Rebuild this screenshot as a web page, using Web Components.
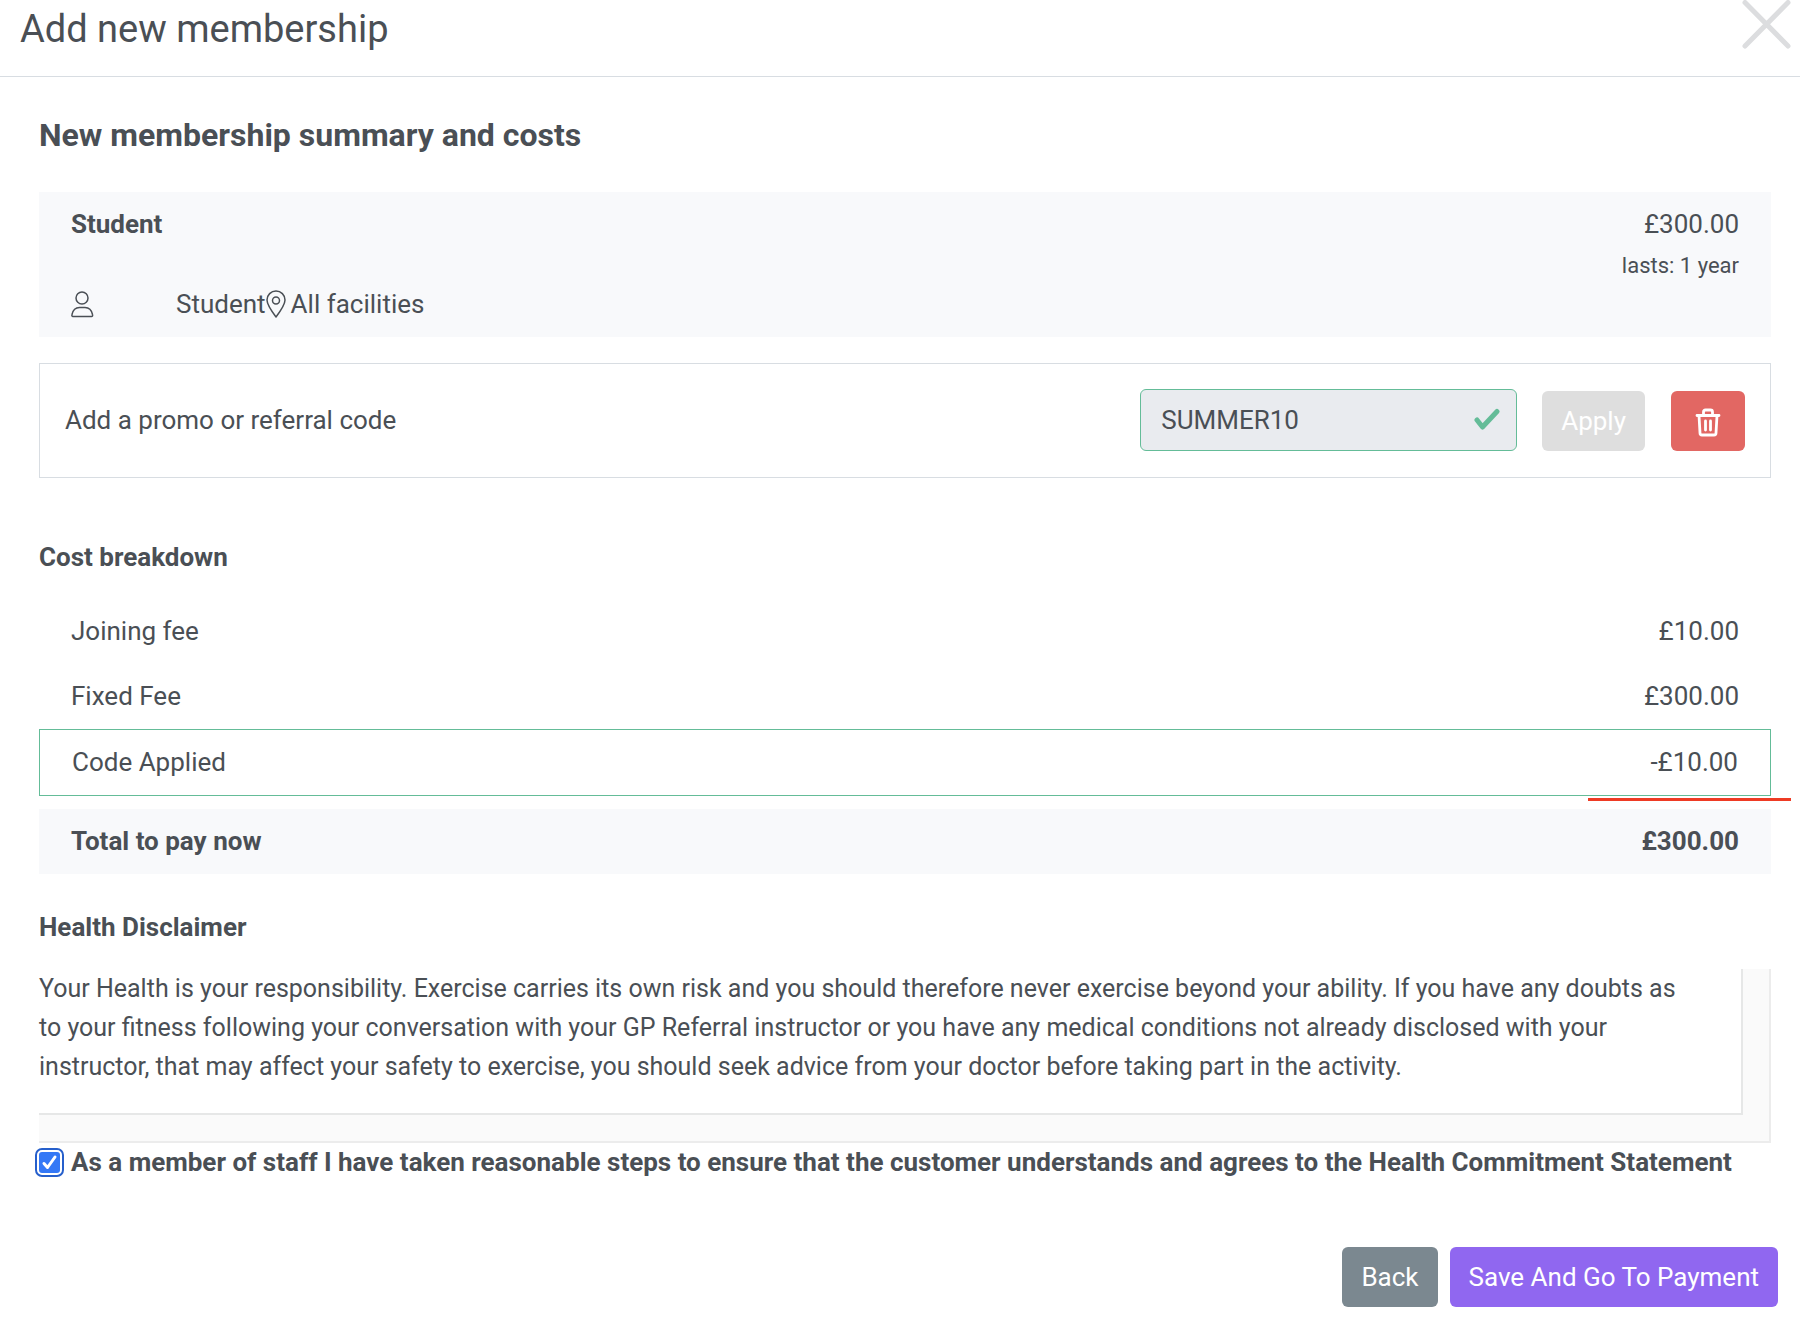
<!DOCTYPE html>
<html lang="en">
<head>
<meta charset="utf-8">
<title>Add new membership</title>
<style>
  body {
    margin: 0;
    background: #FFF;
    color: #4A4F55;
    font: 26px/39px Roboto, "Liberation Sans", sans-serif;
  }
</style>
</head>
<body>
<membership-dialog>
  <span slot="title">Add new membership</span>
  <section-title size="large">New membership summary and costs</section-title>
  <membership-summary>
    <b slot="name">Student</b>
    <span slot="price">£300.00</span>
    <span slot="duration">lasts: 1 year</span>
    <span slot="person">Student</span>
    <span slot="place">All facilities</span>
  </membership-summary>
  <promo-code value="SUMMER10"></promo-code>
  <cost-breakdown></cost-breakdown>
  <health-disclaimer>Your Health is your responsibility. Exercise carries its own risk and you should therefore never exercise beyond your ability. If you have any doubts as to your fitness following your conversation with your GP Referral instructor or you have any medical conditions not already disclosed with your instructor, that may affect your safety to exercise, you should seek advice from your doctor before taking part in the activity.</health-disclaimer>
  <staff-consent>As a member of staff I have taken reasonable steps to ensure that the customer understands and agrees to the Health Commitment Statement</staff-consent>
  <action-button slot="actions" color="#7B8890">Back</action-button>
  <action-button slot="actions" color="#9067F0">Save And Go To Payment</action-button>
</membership-dialog>

<script>
customElements.define('membership-dialog', class MembershipDialog extends HTMLElement {
  constructor() {
    super();
    this.attachShadow({mode: 'open'});
    this.shadowRoot.innerHTML = this.template;
  }

  get template() {
    return `<style>
      :host {
        display: block;
      }
      header {
        display: flex;
        justify-content: space-between;
        align-items: flex-start;
        box-sizing: border-box;
        height: 77px;
        padding: 0 8px 0 20px;
        border-bottom: 1px solid #D8DDE2;
      }
      h1 {
        margin: 0;
        font-size: 38px;
        font-weight: 400;
        line-height: 58px;
      }
      button {
        padding: 0;
        border: 0;
        background: none;
      }
      svg {
        display: block;
      }
      main {
        padding: 32px 29px 0 39px;
      }
      footer {
        display: flex;
        justify-content: flex-end;
        gap: 12px;
        padding: 66px 22px 32px;
      }
    </style>
    <header>
      <h1><slot name="title"></slot></h1>
      <button type="button" aria-label="Close">
        <svg width="52" height="50" viewBox="0 0 52 50" fill="none" stroke="#DCDDDF" stroke-width="5" stroke-linecap="round">
          <path d="M5 2.5 48 46M48 2.5 5 46"/>
        </svg>
      </button>
    </header>
    <main><slot></slot></main>
    <footer><slot name="actions"></slot></footer>`;
  }
});

customElements.define('section-title', class SectionTitle extends HTMLElement {
  constructor() {
    super();
    this.attachShadow({mode: 'open'});
    this.shadowRoot.innerHTML = this.template;
  }

  get template() {
    return `<style>
      :host {
        display: block;
      }
      h2 {
        margin: 0;
        font-size: 26px;
        font-weight: 700;
        line-height: 40px;
      }
      :host([size="large"]) h2 {
        margin-bottom: 31px;
        font-size: 32px;
        line-height: 52px;
      }
    </style>
    <h2><slot></slot></h2>`;
  }
});

customElements.define('membership-summary', class MembershipSummary extends HTMLElement {
  constructor() {
    super();
    this.attachShadow({mode: 'open'});
    this.shadowRoot.innerHTML = this.template;
  }

  get template() {
    return `<style>
      :host {
        display: flex;
        flex-direction: column;
        box-sizing: border-box;
        padding: 12px 32px 14px;
        background: #F8F9FB;
      }
      .row {
        display: flex;
        justify-content: space-between;
        line-height: 40px;
      }
      .duration {
        justify-content: flex-end;
        padding-top: 2px;
        font-size: 22px;
      }
      .details {
        justify-content: flex-start;
        align-items: center;
        line-height: 37px;
      }
      .person {
        margin-right: 82px;
      }
      .pin {
        margin-right: 5px;
      }
      svg {
        display: block;
        fill: none;
        stroke: #4A4F55;
        stroke-width: 1.5;
        stroke-linejoin: round;
      }
    </style>
    <div class="row"><slot name="name"></slot><slot name="price"></slot></div>
    <div class="row duration"><slot name="duration"></slot></div>
    <div class="row details">
      <svg class="person" width="23" height="30" viewBox="0 0 23 30">
        <circle cx="11" cy="8" r="6"/>
        <path d="M2 26.5H20.5Q22 26.500 21.500 24.500Q20 17.500 14 17.500H8.500Q2.500 17.500 1 24.500Q.5 26.500 2 26.500Z"/>
      </svg>
      <slot name="person"></slot>
      <svg class="pin" width="20" height="30" viewBox="0 0 20 30">
        <path d="M10 27Q1 15 1 10A9 9 0 0 1 19 10Q19 15 10 27Z"/>
        <circle cx="10" cy="10.500" r="3.500"/>
      </svg>
      <slot name="place"></slot>
    </div>`;
  }
});

customElements.define('promo-code', class PromoCode extends HTMLElement {
  constructor() {
    super();
    this.attachShadow({mode: 'open'});
    this.shadowRoot.innerHTML = this.template;
  }

  get template() {
    return `<style>
      :host {
        display: flex;
        align-items: center;
        margin: 26px 0 59px;
        padding: 25px 25px 26px;
        border: 1px solid #D8DDE2;
      }
      label {
        flex: 1;
      }
      .field {
        display: grid;
        align-items: center;
        width: 377px;
        margin-right: 25px;
      }
      .field > * {
        grid-area: 1 / 1;
      }
      input {
        box-sizing: border-box;
        width: 100%;
        height: 62px;
        padding: 0 60px 0 20px;
        border: 1px solid #64BC98;
        border-radius: 6px;
        background: #E9EBEF;
        color: inherit;
        font: inherit;
      }
      .tick {
        justify-self: end;
        margin-right: 17px;
      }
      .remove {
        display: flex;
        justify-content: center;
        align-items: center;
        width: 74px;
        height: 60px;
        margin: 2px 0 0 26px;
        padding: 0;
        border: 0;
        border-radius: 6px;
        background: #E26763;
      }
      action-button {
        margin-top: 2px;
      }
    </style>
    <label for="code">Add a promo or referral code</label>
    <div class="field">
      <input id="code" type="text" value="${this.getAttribute('value')}" readonly>
      <svg class="tick" width="26" height="30" viewBox="0 0 26 30" fill="none" stroke="#64BC98" stroke-width="5" stroke-linecap="round" stroke-linejoin="round">
        <path d="M3 15 8.500 22 23 6.500"/>
      </svg>
    </div>
    <action-button color="#DEDEDE" disabled>Apply</action-button>
    <button class="remove" type="button" aria-label="Remove code">
      <svg width="26" height="32" viewBox="0 0 26 32" fill="none" stroke="#FFF" stroke-width="2.800" stroke-linecap="round" stroke-linejoin="round">
        <path d="M2 10.500H24M8.500 10.500V7Q8.500 5 10.500 5H15.500Q17.500 5 17.500 7V10.500M4 10.500 5 28Q5 30 7 30H19Q21 30 21 28L22 10.500M10.500 16V25M15.500 16V25"/>
      </svg>
    </button>`;
  }
});

customElements.define('action-button', class ActionButton extends HTMLElement {
  constructor() {
    super();
    this.attachShadow({mode: 'open'});
    this.shadowRoot.innerHTML = this.template;
  }

  get template() {
    return `<style>
      :host {
        display: block;
      }
      button {
        display: block;
        height: 60px;
        padding: 0 19px;
        border: 0;
        border-radius: 6px;
        background: ${this.getAttribute('color')};
        color: #FFF;
        font: inherit;
      }
    </style>
    <button type="button" ${this.hasAttribute('disabled') ? 'disabled' : ''}><slot></slot></button>`;
  }
});

customElements.define('cost-breakdown', class CostBreakdown extends HTMLElement {
  constructor() {
    super();
    this.attachShadow({mode: 'open'});
    this.shadowRoot.innerHTML = this.template;
  }

  get template() {
    return `<style>
      :host {
        display: block;
      }
      section-title {
        margin-bottom: 22px;
      }
      .costs {
        position: relative;
      }
      table {
        width: 100%;
        border-collapse: separate;
        border-spacing: 0;
      }
      th, td {
        height: 65px;
        padding: 0 32px;
        font-weight: 400;
        text-align: left;
      }
      td {
        text-align: right;
      }
      .applied > * {
        border: solid #64BC98;
        border-width: 1px 0;
      }
      .applied th {
        border-left-width: 1px;
      }
      .applied td {
        border-right-width: 1px;
      }
      .space td {
        height: 13px;
        padding: 0;
      }
      .total > * {
        background: #F8F9FB;
        font-weight: 700;
      }
      .mark {
        position: absolute;
        right: -20px;
        bottom: 73px;
        width: 203px;
        height: 3px;
        background: #EE3B24;
      }
    </style>
    <section-title>Cost breakdown</section-title>
    <div class="costs">
      <table>
        <tr><th scope="row">Joining fee</th><td>£10.00</td></tr>
        <tr><th scope="row">Fixed Fee</th><td>£300.00</td></tr>
        <tr class="applied"><th scope="row">Code Applied</th><td>-£10.00</td></tr>
        <tr class="space"><td colspan="2"></td></tr>
        <tr class="total"><th scope="row">Total to pay now</th><td>£300.00</td></tr>
      </table>
      <div class="mark"></div>
    </div>`;
  }
});

customElements.define('health-disclaimer', class HealthDisclaimer extends HTMLElement {
  constructor() {
    super();
    this.attachShadow({mode: 'open'});
    this.shadowRoot.innerHTML = this.template;
  }

  get template() {
    return `<style>
      :host {
        display: block;
      }
      section-title {
        margin: 33px 0 22px;
      }
      .frame {
        padding: 0 26px 26px 0;
        border: solid #ECECEC;
        border-width: 0 2px 2px 0;
        background: #FAFAFA;
      }
      p {
        margin: 0;
        padding: 0 42px 27px 0;
        border: solid #E6E7E7;
        border-width: 0 2px 2px 0;
        background: #FFF;
        font-size: 25px;
        line-height: 39px;
      }
    </style>
    <section-title>Health Disclaimer</section-title>
    <div class="frame"><p><slot></slot></p></div>`;
  }
});

customElements.define('staff-consent', class StaffConsent extends HTMLElement {
  constructor() {
    super();
    this.attachShadow({mode: 'open'});
    this.shadowRoot.innerHTML = this.template;
  }

  get template() {
    return `<style>
      :host {
        display: block;
      }
      label {
        display: flex;
        align-items: center;
        gap: 11px;
        line-height: 38px;
        font-weight: 700;
      }
      .box {
        display: grid;
        flex: none;
      }
      .box > * {
        grid-area: 1 / 1;
      }
      input {
        appearance: none;
        width: 21px;
        height: 21px;
        margin: 0;
        border-radius: 3px;
        outline: 2px solid #265FCB;
        outline-offset: 2px;
        background: #3478F6;
      }
      svg {
        pointer-events: none;
      }
    </style>
    <label>
      <span class="box">
        <input type="checkbox" checked>
        <svg width="21" height="21" viewBox="0 0 21 21" fill="none" stroke="#FFF" stroke-width="3" stroke-linecap="round" stroke-linejoin="round">
          <path d="M5 11.500 8.500 15.500 16 5"/>
        </svg>
      </span>
      <span><slot></slot></span>
    </label>`;
  }
});
</script>
</body>
</html>
